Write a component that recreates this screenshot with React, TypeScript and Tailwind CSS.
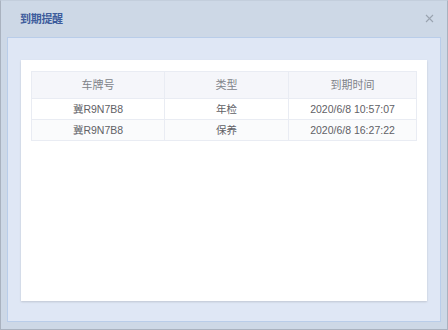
import React from "react";

const rows = [
  { plate: "冀R9N7B8", type: "年检", time: "2020/6/8 10:57:07" },
  { plate: "冀R9N7B8", type: "保养", time: "2020/6/8 16:27:22" },
];

export default function App() {
  return (
    <div
      className="w-[448px] h-[330px] border border-[#a9b2bf] border-t-[#c3cedc] bg-[#cdd8e6] flex flex-col"
      style={{ fontFamily: '"Liberation Sans", "Noto Sans CJK SC", sans-serif' }}
    >
      <div className="h-[36px] shrink-0 flex items-center justify-between pl-[19px] pr-[13px]">
        <span className="text-[11px] font-bold text-[#3d5c9c] tracking-[-0.3px]">到期提醒</span>
        <svg width="9" height="9" viewBox="0 0 9 9" className="mt-[-2px]">
          <path d="M1 1 L8 8 M8 1 L1 8" stroke="#9aa4b0" strokeWidth="1.1" />
        </svg>
      </div>
      <div className="mx-[6px] h-[285px] border border-[#b9cde9] bg-[#dfe7f5] px-[13px] pt-[22px] pb-[20px]">
        <div className="h-full bg-white shadow-[0_1px_2px_rgba(0,0,0,0.15)] px-[10px] pt-[11px]">
          <table className="w-full border-collapse text-[10.5px] text-[#5f6166]">
            <thead>
              <tr className="h-[27px] bg-[#f5f6fa] text-[#808389]">
                <th className="font-normal text-[11px] border border-[#e9ecf3] w-[133px]">车牌号</th>
                <th className="font-normal text-[11px] border border-[#e9ecf3] w-[124px]">类型</th>
                <th className="font-normal text-[11px] border border-[#e9ecf3]">到期时间</th>
              </tr>
            </thead>
            <tbody>
              {rows.map((r, i) => (
                <tr key={i} className={`h-[21px] ${i === 1 ? "bg-[#fafbfc]" : "bg-white"}`}>
                  <td className="text-center border border-[#e9ecf3] leading-none">{r.plate}</td>
                  <td className="text-center border border-[#e9ecf3] leading-none">{r.type}</td>
                  <td className="text-center border border-[#e9ecf3] leading-none">{r.time}</td>
                </tr>
              ))}
            </tbody>
          </table>
        </div>
      </div>
    </div>
  );
}
